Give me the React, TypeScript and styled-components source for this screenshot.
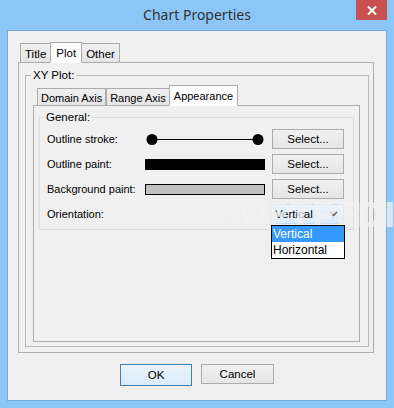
import React from 'react'
import styled, {createGlobalStyle} from 'styled-components'

const GlobalStyle = createGlobalStyle`
  html, body {
    margin: 0;
    padding: 0;
  }
  body {
    font-family: "Liberation Sans", Arial, sans-serif;
    font-size: 11px;
    color: #000;
  }
`

const Window = styled.div`
  width: 394px;
  height: 408px;
  background: #8cc6f6;
  display: flex;
  flex-direction: column;
  box-sizing: border-box;
  position: relative;
  overflow: hidden;
`

const TitleBar = styled.div`
  height: 30px;
  display: grid;
  grid-template-columns: 1fr auto 1fr;
  align-items: center;
`

const Title = styled.div`
  grid-column: 2;
  font-family: "Noto Sans", "Open Sans", sans-serif;
  font-size: 14px;
  color: #333;
  padding-bottom: 2px;
`

const CloseButton = styled.div`
  grid-column: 3;
  justify-self: end;
  align-self: start;
  width: 31px;
  height: 20px;
  margin-right: 7px;
  background: #c75050;
  display: flex;
  align-items: center;
  justify-content: center;
`

const Content = styled.div`
  flex: 1;
  margin: 0 7px 7px;
  border: 1px solid #73aadb;
  background: #f0f0f0;
  display: flex;
  flex-direction: column;
  padding: 11px 12px 0 10px;
  min-height: 0;
`

const TabStrip = styled.div<{inset: number}>`
  display: flex;
  align-items: flex-end;
  padding-left: ${(p) => p.inset}px;
  position: relative;
  z-index: 1;
  margin-bottom: -1px;
`

const Tab = styled.div<{active?: boolean; h: number; px: number; fs: number}>`
  height: ${(p) => p.h + 1}px;
  box-sizing: border-box;
  padding: 0 ${(p) => (p.active ? p.px + 1 : p.px)}px;
  margin: 0 ${(p) => (p.active ? -1 : 0)}px;
  border: 1px solid #acacac;
  border-bottom-color: ${(p) => (p.active ? '#fff' : '#acacac')};
  background: ${(p) => (p.active ? '#fff' : 'linear-gradient(#f0f0f0, #e5e5e5)')};
  display: flex;
  align-items: center;
  font-size: ${(p) => p.fs}px;
  position: relative;
  z-index: ${(p) => (p.active ? 2 : 1)};
  padding-top: ${(p) => (p.active ? 0 : 1)}px;
`

const TabPanel = styled.div<{pad: string}>`
  flex: 1;
  border: 1px solid #acacac;
  display: flex;
  flex-direction: column;
  padding: ${(p) => p.pad};
  min-height: 0;
`

const Group = styled.fieldset<{pad: string; tone: string}>`
  margin: 0;
  flex: 1;
  min-width: 0;
  border: 1px solid ${(p) => p.tone};
  padding: ${(p) => p.pad};
  display: flex;
  flex-direction: column;
  min-height: 0;
`

const Legend = styled.legend<{shift: number}>`
  margin-left: ${(p) => p.shift}px;
  padding: 0 2px;
  font-size: 11.5px;
  line-height: 13px;
`

const Rows = styled.div`
  display: grid;
  grid-template-columns: 91px 120px 72px;
  grid-auto-rows: 20px;
  column-gap: 7px;
  row-gap: 5px;
  align-items: center;
`

const Label = styled.div`
  font-size: 11px;
  white-space: nowrap;
`

const Swatch = styled.div<{fill: string}>`
  height: 11px;
  box-sizing: border-box;
  border: 1px solid #000;
  background: ${(p) => p.fill};
`

const Button = styled.div<{primary?: boolean}>`
  height: ${(p) => (p.primary ? 22 : 20)}px;
  box-sizing: border-box;
  border: 1px solid ${(p) => (p.primary ? '#3c7fb1' : '#acacac')};
  background: ${(p) =>
    p.primary ? 'linear-gradient(#eaf3fb, #dcecfc)' : 'linear-gradient(#f0f0f0, #e5e5e5)'};
  display: flex;
  align-items: center;
  justify-content: center;
  font-size: 11.5px;
`

const DialogButton = styled(Button)<{w: number}>`
  width: ${(p) => p.w}px;
`

const Combo = styled.div`
  height: 20px;
  margin-left: -1px;
  box-sizing: border-box;
  border: 1px solid #c5dcf2;
  background: linear-gradient(#ecf4fc, #dcecfc);
  display: flex;
  align-items: center;
  justify-content: space-between;
  padding: 0 5px 0 3px;
  font-size: 11.5px;
  position: relative;
`

const DropList = styled.div`
  position: absolute;
  left: -1px;
  top: 20px;
  width: 74px;
  box-sizing: border-box;
  border: 1px solid #000;
  background: #fff;
  z-index: 5;
`

const DropItem = styled.div<{selected?: boolean}>`
  height: 16px;
  line-height: 16px;
  padding-left: 1px;
  font-size: 12px;
  background: ${(p) => (p.selected ? '#3399ff' : '#fff')};
  color: ${(p) => (p.selected ? '#fff' : '#000')};
`

const ButtonRow = styled.div`
  display: flex;
  justify-content: center;
  gap: 9px;
  padding: 11px 0 14px 0;
  margin-right: -2px;
`

const Watermark = styled.div`
  position: absolute;
  left: 216px;
  top: 196px;
  font-family: "DejaVu Sans", sans-serif;
  font-weight: bold;
  font-size: 33px;
  letter-spacing: -0.5px;
  color: rgba(255, 255, 255, 0.6);
  text-shadow: 0 0 1px rgba(190, 190, 190, 0.4);
  pointer-events: none;
  z-index: 3;
`

function StrokeSample() {
  return (
    <svg width="120" height="20" viewBox="0 0 120 20">
      <line x1="7" y1="10.5" x2="113" y2="10.5" stroke="#000" strokeWidth="1" />
      <circle cx="7" cy="10.5" r="5.5" fill="#000" />
      <circle cx="113" cy="10.5" r="5.5" fill="#000" />
    </svg>
  )
}

export default function App() {
  return (
    <Window>
      <GlobalStyle />
      <TitleBar>
        <Title>Chart Properties</Title>
        <CloseButton>
          <svg width="10" height="9" viewBox="0 0 10 9">
            <path d="M1 0.5 L9 8.5 M9 0.5 L1 8.5" stroke="#fff" strokeWidth="2" />
          </svg>
        </CloseButton>
      </TitleBar>
      <Content>
        <TabStrip inset={2}>
          <Tab h={19} px={4} fs={11.5}>
            Title
          </Tab>
          <Tab h={20} px={4} fs={11.5} active>
            Plot
          </Tab>
          <Tab h={19} px={4} fs={11.5}>
            Other
          </Tab>
        </TabStrip>
        <TabPanel pad="6px 4px 5px 6px">
          <Group tone="#b9b9b9" pad="3px 8px 4px 7px">
            <Legend shift={-2}>XY Plot:</Legend>
            <TabStrip inset={4}>
              <Tab h={17} px={3} fs={11}>
                Domain Axis
              </Tab>
              <Tab h={17} px={3} fs={11}>
                Range Axis
              </Tab>
              <Tab h={20} px={3} fs={11} active>
                Appearance
              </Tab>
            </TabStrip>
            <TabPanel pad="5px 5px 0 5px">
              <Group tone="#dcdcdc" pad="5px 6px 5px 7px" style={{flex: 'none'}}>
                <Legend shift={-3}>General:</Legend>
                <Rows>
                  <Label>Outline stroke:</Label>
                  <StrokeSample />
                  <Button>Select...</Button>
                  <Label>Outline paint:</Label>
                  <Swatch fill="#000" />
                  <Button>Select...</Button>
                  <Label>Background paint:</Label>
                  <Swatch fill="#c0c0c0" />
                  <Button>Select...</Button>
                  <Label>Orientation:</Label>
                  <div />
                  <Combo>
                    Vertical
                    <svg width="9" height="6" viewBox="0 0 9 6">
                      <path d="M1 1 L4.5 4.5 L8 1" stroke="#555" strokeWidth="1.4" fill="none" />
                    </svg>
                    <DropList>
                      <DropItem selected>Vertical</DropItem>
                      <DropItem>Horizontal</DropItem>
                    </DropList>
                  </Combo>
                </Rows>
              </Group>
            </TabPanel>
          </Group>
        </TabPanel>
        <ButtonRow>
          <DialogButton primary w={72}>
            OK
          </DialogButton>
          <DialogButton w={73}>Cancel</DialogButton>
        </ButtonRow>
      </Content>
      <Watermark>SOFTPEDIA</Watermark>
    </Window>
  )
}
